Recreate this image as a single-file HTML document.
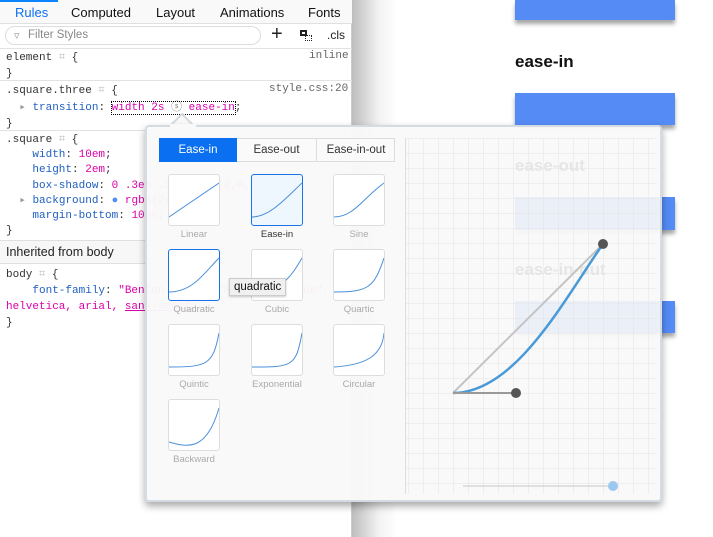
<!DOCTYPE html>
<html><head><meta charset="utf-8"><style>
*{margin:0;padding:0;box-sizing:border-box}
body{width:713px;height:537px;overflow:hidden;background:#fff;position:relative;font-family:"Liberation Sans",sans-serif}
.a{position:absolute}
.code{font-family:"Liberation Mono",monospace;font-size:11px;color:#333;white-space:pre}
.p{color:#1f5fbf}.v{color:#dd00a9}
.sq{position:absolute;left:515px;width:160px;background:#548bf4;box-shadow:0 4px 4px rgba(0,0,0,.35)}
.hl{position:absolute;height:1px;background:#e2e2e2;left:0;width:352px}
.th{position:absolute;width:52px;height:52px;border:1px solid #ddd;border-radius:3px;background:#fff}
.th.sel{border-color:#1a73e8}
.lb{position:absolute;width:80px;text-align:center;font-size:9.5px;color:#aaa}
</style></head><body>
<div class="a" style="left:352px;top:0;width:45px;height:537px;background:linear-gradient(90deg,#bdbdbd,#f3f3f3 60%,#fff)"></div>
<div class="sq" style="top:0;height:20px"></div>
<div class="a" style="left:515px;top:52px;font-weight:bold;font-size:17px;color:#111">ease-in</div>
<div class="sq" style="top:93px;height:32px"></div>
<div class="sq" style="top:197px;height:33px"></div>
<div class="sq" style="top:301px;height:32px"></div>

<div class="a" style="left:0;top:0;width:352px;height:537px;background:#fff;border-right:1px solid #ccc"></div>
<div class="a" style="left:0;top:0;width:352px;height:24px;background:#f9f9fa;border-bottom:1px solid #e0e0e0"></div>
<div class="a" style="left:0;top:0;width:58px;height:2px;background:#0a84ff"></div>
<div class="a" style="left:15px;top:5px;font-size:13px;color:#0a6ff1">Rules</div>
<div class="a" style="left:71px;top:5px;font-size:13px;color:#111">Computed</div>
<div class="a" style="left:156px;top:5px;font-size:13px;color:#111">Layout</div>
<div class="a" style="left:220px;top:5px;font-size:13px;color:#111">Animations</div>
<div class="a" style="left:308px;top:5px;font-size:13px;color:#111">Fonts</div>
<div class="a" style="left:5px;top:26px;width:256px;height:19px;border:1px solid #ddd;border-radius:10px;background:#fff"></div>
<div class="a" style="left:14px;top:29px;font-size:11px;color:#999">▿</div>
<div class="a" style="left:28px;top:29px;font-size:11.5px;color:#888">Filter Styles</div>
<div class="a" style="left:271px;top:23px;font-size:20px;color:#222;font-weight:300">+</div>
<div class="a" style="left:300px;top:30px;width:7px;height:6px;border:2px solid #222"></div>
<div class="a" style="left:305px;top:35px;width:7px;height:6px;border:1px dotted #222"></div>
<div class="a" style="left:327px;top:28px;font-size:12px;color:#222">.cls</div>
<div class="hl" style="top:48px"></div>
<div class="a code" style="left:6px;top:50px;line-height:16px">element <span style="color:#bbb">⌗</span> {
}</div>
<div class="a code" style="left:309px;top:50px;color:#666">inline</div>
<div class="hl" style="top:80px"></div>
<div class="a code" style="left:6px;top:83px;line-height:16.5px">.square.three <span style="color:#bbb">⌗</span> {
  <span style="color:#999">▸</span> <span class="p">transition</span>: <span class="v" style="outline:1px dotted #000">width 2s <span style="color:#888">ⓢ</span> ease-in</span>;
}</div>
<div class="a code" style="left:269px;top:83px;color:#666">style.css:20</div>
<div class="hl" style="top:130px"></div>
<div class="a code" style="left:6px;top:133px;line-height:15.2px">.square <span style="color:#bbb">⌗</span> {
    <span class="p">width</span>: <span class="v">10em</span>;
    <span class="p">height</span>: <span class="v">2em</span>;
    <span class="p">box-shadow</span>: <span class="v">0 .3em .3em rgba(0,0,0,.5)</span>;
  <span style="color:#999">▸</span> <span class="p">background</span>: <span style="color:#548bf4">●</span> <span class="v">rgba(2xx, 243,</span>
    <span class="p">margin-bottom</span>: <span class="v">10px</span>;
}</div>
<div class="a" style="left:0;top:240px;width:352px;height:24px;background:#f7f7f7;border-top:1px solid #e0e0e0;border-bottom:1px solid #e0e0e0"></div>
<div class="a" style="left:6px;top:245px;font-size:12.5px;color:#222">Inherited from body</div>
<div class="a code" style="left:6px;top:267px;line-height:16px">body <span style="color:#bbb">⌗</span> {
    <span class="p">font-family</span>: <span class="v">"Benton Sans", "Helvetica Neue",</span>
<span class="v">helvetica, arial, <u>sans-serif</u></span>;
}</div>

<svg class="a" style="left:168px;top:112px" width="30" height="16"><path d="M1 15 L14 2 L27 15" fill="#f9f9f9" stroke="#d5dbe2" stroke-width="2"/></svg>
<div class="a" style="left:145px;top:125px;width:517px;height:377px;border:2px solid #d5dbe2;border-radius:4px;background:rgba(249,249,249,.96);box-shadow:0 4px 8px rgba(0,0,0,.35)"></div>
<div class="a" style="left:170px;top:124px;width:26px;height:3px;background:#f9f9f9"></div>
<div class="a" style="left:515px;top:156px;font-weight:bold;font-size:17px;color:#e6e6e6">ease-out</div>
<div class="a" style="left:515px;top:260px;font-weight:bold;font-size:17px;color:#e6e6e6">ease-in-out</div>
<div class="a" style="left:515px;top:197px;width:145px;height:33px;background:#ebeff8"></div>
<div class="a" style="left:515px;top:301px;width:145px;height:32px;background:#ebeff8"></div>

<div class="a" style="left:159px;top:138px;width:236px;height:24px;border:1px solid #ddd;background:#fafafa"></div>
<div class="a" style="left:159px;top:138px;width:78px;height:24px;background:#0a6ff1;color:#fff;font-size:11.5px;text-align:center;line-height:24px">Ease-in</div>
<div class="a" style="left:237px;top:138px;width:80px;height:24px;border-right:1px solid #ddd;font-size:11.5px;color:#333;text-align:center;line-height:24px">Ease-out</div>
<div class="a" style="left:317px;top:138px;width:78px;height:24px;font-size:11.5px;color:#333;text-align:center;line-height:24px">Ease-in-out</div>

<div class="th" style="left:168px;top:174px"><svg width="50" height="50"><path d="M0 42 L50 8" stroke="#4a90d9" fill="none"/></svg></div>
<div class="th sel" style="left:251px;top:174px;background:#eef6fe"><svg width="50" height="50"><path d="M0 42 C18 42 35 22 50 8" stroke="#4a90d9" fill="none"/></svg></div>
<div class="th" style="left:333px;top:174px"><svg width="50" height="50"><path d="M0 42 C20 42 30 22 50 8" stroke="#4a90d9" fill="none"/></svg></div>
<div class="lb" style="left:154px;top:229px">Linear</div>
<div class="lb" style="left:237px;top:229px;color:#333">Ease-in</div>
<div class="lb" style="left:319px;top:229px">Sine</div>

<div class="th sel" style="left:168px;top:249px"><svg width="50" height="50"><path d="M0 42 C24 42 36 22 50 8" stroke="#4a90d9" fill="none"/></svg></div>
<div class="th" style="left:251px;top:249px"><svg width="50" height="50"><path d="M0 42 C30 42 40 25 50 8" stroke="#4a90d9" fill="none"/></svg></div>
<div class="th" style="left:333px;top:249px"><svg width="50" height="50"><path d="M0 42 C34 42 40 38 50 8" stroke="#4a90d9" fill="none"/></svg></div>
<div class="lb" style="left:154px;top:304px">Quadratic</div>
<div class="lb" style="left:237px;top:304px">Cubic</div>
<div class="lb" style="left:319px;top:304px">Quartic</div>

<div class="th" style="left:168px;top:324px"><svg width="50" height="50"><path d="M0 42 C38 42 44 40 50 8" stroke="#4a90d9" fill="none"/></svg></div>
<div class="th" style="left:251px;top:324px"><svg width="50" height="50"><path d="M0 42 C40 42 44 42 50 8" stroke="#4a90d9" fill="none"/></svg></div>
<div class="th" style="left:333px;top:324px"><svg width="50" height="50"><path d="M0 42 C30 40 48 32 50 8" stroke="#4a90d9" fill="none"/></svg></div>
<div class="lb" style="left:154px;top:379px">Quintic</div>
<div class="lb" style="left:237px;top:379px">Exponential</div>
<div class="lb" style="left:319px;top:379px">Circular</div>

<div class="th" style="left:168px;top:399px"><svg width="50" height="50"><path d="M0 42 C20 48 38 50 50 8" stroke="#4a90d9" fill="none"/></svg></div>
<div class="lb" style="left:154px;top:454px">Backward</div>

<div class="a" style="left:229px;top:278px;padding:2px 4px;background:#f0f0f0;border:1px solid #ccc;font-size:11.5px;color:#111;box-shadow:0 1px 2px rgba(0,0,0,.2)">quadratic</div>

<svg class="a" style="left:405px;top:138px" width="252" height="356">
<defs><pattern id="g" width="15" height="15" patternUnits="userSpaceOnUse" x="3" y="0"><path d="M0 0 H15 M0 0 V15" stroke="#e3e3e3" stroke-width="1" fill="none"/></pattern></defs>
<rect width="252" height="356" fill="url(#g)"/>
<line x1="0.5" y1="0" x2="0.5" y2="356" stroke="#ddd"/>
<path d="M48 255 L198 106" stroke="#c4c4c4" stroke-width="2"/>
<path d="M48 255 C111 255 160 160 198 106" stroke="#4a9ad8" stroke-width="2.5" fill="none"/>
<path d="M48 255 L111 255" stroke="#999" stroke-width="2"/>
<circle cx="111" cy="255" r="5" fill="#555"/>
<circle cx="198" cy="106" r="5" fill="#555"/>
<line x1="58" y1="348" x2="206" y2="348" stroke="#c8c8c8"/>
<circle cx="208" cy="348" r="5" fill="#9cc7ee"/>
</svg>
</body></html>
